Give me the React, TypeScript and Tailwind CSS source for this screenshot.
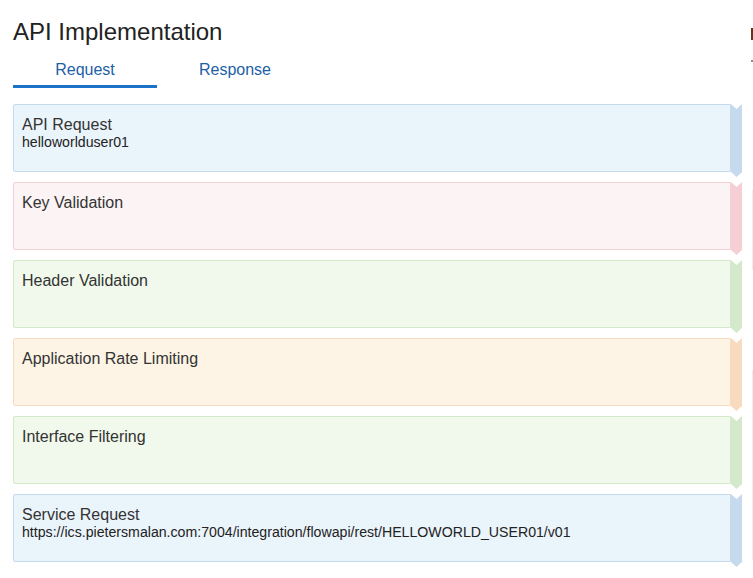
type Step = {
  title: string;
  detail?: string;
  bg: string;
  border: string;
  fill: string;
};

const steps: Step[] = [
  { title: "API Request", detail: "helloworlduser01", bg: "bg-[#eaf4fb]", border: "border-[#c6daee]", fill: "#c6daee" },
  { title: "Key Validation", bg: "bg-[#fbf3f4]", border: "border-[#f4cfd3]", fill: "#f5cfd3" },
  { title: "Header Validation", bg: "bg-[#f0f9ec]", border: "border-[#d4e9cc]", fill: "#d4e9cc" },
  { title: "Application Rate Limiting", bg: "bg-[#fdf4e6]", border: "border-[#f8dcbf]", fill: "#f8dbbe" },
  { title: "Interface Filtering", bg: "bg-[#f0f9ec]", border: "border-[#d4e9cc]", fill: "#d4e9cc" },
  {
    title: "Service Request",
    detail: "https://ics.pietersmalan.com:7004/integration/flowapi/rest/HELLOWORLD_USER01/v01",
    bg: "bg-[#eaf4fb]",
    border: "border-[#c6daee]",
    fill: "#c6daee",
  },
];

const Chevron = ({ fill }: { fill: string }) => (
  <svg width="11" height="73" viewBox="0 0 11 73" className="shrink-0 overflow-visible">
    <polygon points="0,0 5.5,5 11,0 11,68 5.5,73 0,68" fill={fill} />
  </svg>
);

const StepCard = ({ step }: { step: Step }) => (
  <div className="flex h-[68px]">
    <div className={`flex-1 border ${step.border} ${step.bg} rounded-l-[2px] px-[8px] pt-[10px]`}>
      <p className="text-[16px] leading-[20px] text-[#333]">{step.title}</p>
      {step.detail && <p className="text-[14.15px] leading-[14px] text-[#222]">{step.detail}</p>}
    </div>
    <Chevron fill={step.fill} />
  </div>
);

export default function App() {
  return (
    <div className="relative w-[753px] h-[578px] overflow-hidden bg-white font-['Liberation_Sans',Arial,sans-serif]">
      <div className="w-[742px] pl-[13px] pt-[17px]">
        <h1 className="text-[24px] leading-[30px] text-[#222]">API Implementation</h1>
        <div className="flex mt-[13px]">
          <div className="w-[144px] border-b-[3px] border-[#1a72c9] pb-[5px] text-center text-[16px] leading-[20px] text-[#1d5fa6]">
            Request
          </div>
          <div className="w-[156px] pb-[5px] text-center text-[16px] leading-[20px] text-[#1d5fa6]">Response</div>
        </div>
        <div className="mt-[16px] flex flex-col gap-[10px]">
          {steps.map((step) => (
            <StepCard key={step.title} step={step} />
          ))}
        </div>
      </div>
      <div className="absolute left-[751px] top-[28px] h-[12px] w-[2px] bg-[#5a3a1a]" />
      <div className="absolute left-[751px] top-[60px] h-[2px] w-[2px] bg-[#888]" />
      <div className="absolute left-[752px] top-[190px] h-[80px] w-px bg-[#eee]" />
      <div className="absolute left-[752px] top-[370px] h-[190px] w-px bg-[#eee]" />
    </div>
  );
}
